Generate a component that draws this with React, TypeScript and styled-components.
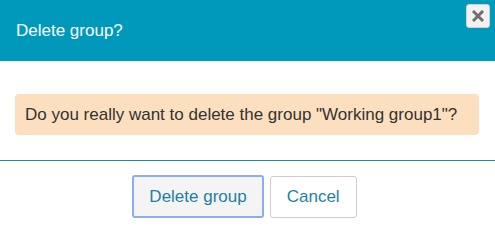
import * as React from "react";
import { FunctionComponent } from "react";
import styled, { createGlobalStyle } from "styled-components";

const GlobalStyle = createGlobalStyle`
  html, body {
    margin: 0;
    padding: 0;
    background: #ffffff;
    font-family: "Liberation Sans", Arial, sans-serif;
  }
`;

const DialogRoot = styled.div`
  width: 495px;
  height: 230px;
  display: flex;
  flex-direction: column;
  background: #ffffff;
  overflow: hidden;
`;
const Header = styled.div`
  position: relative;
  height: 61px;
  display: flex;
  align-items: center;
  padding: 0 16px;
  box-sizing: border-box;
  background: #0099bb;
`;
const Title = styled.h2`
  margin: 0;
  font-size: 17px;
  font-weight: normal;
  color: #ffffff;
  line-height: 20px;
`;
const CloseButton = styled.button`
  position: absolute;
  top: 4px;
  right: 5px;
  width: 24px;
  height: 24px;
  padding: 0;
  border: 1px solid #d0d0d0;
  border-radius: 3px;
  background: #f2f2f2;
  display: flex;
  align-items: center;
  justify-content: center;
  cursor: pointer;
`;
const Body = styled.div`
  padding: 33px 16px 25px 15px;
`;
const Alert = styled.div`
  height: 41px;
  display: flex;
  align-items: center;
  padding: 0 10px;
  box-sizing: border-box;
  border-radius: 4px;
  background: #fbdfbf;
  color: #333;
  font-size: 17px;
`;
const Footer = styled.div`
  border-top: 1px solid #1f8aa8;
  display: flex;
  justify-content: center;
  gap: 6px;
  padding: 14px 6px 0 0;
`;
const Button = styled.button<{ $focused?: boolean }>`
  height: ${(p) => (p.$focused ? "43px" : "42px")};
  padding: 0 ${(p) => (p.$focused ? "15px" : "16px")};
  margin-top: ${(p) => (p.$focused ? "0" : "1px")};
  font-family: "Liberation Sans", Arial, sans-serif;
  font-size: 17px;
  color: #1f7fa3;
  background: ${(p) => (p.$focused ? "#f4f4f4" : "#ffffff")};
  border: ${(p) => (p.$focused ? "2px solid #8aaef0" : "1px solid #cccccc")};
  border-radius: 3px;
  cursor: pointer;
`;

const CloseIcon = () => (
  <svg width="12" height="12" viewBox="0 0 12 12">
    <path d="M2 2 L10 10 M10 2 L2 10" stroke="#6f6f6f" strokeWidth="3" strokeLinecap="square" />
  </svg>
);

const App: FunctionComponent = () => {
  return (
    <>
      <GlobalStyle />
      <DialogRoot>
        <Header>
          <Title>Delete group?</Title>
          <CloseButton aria-label="Close">
            <CloseIcon />
          </CloseButton>
        </Header>
        <Body>
          <Alert>Do you really want to delete the group "Working group1"?</Alert>
        </Body>
        <Footer>
          <Button $focused>Delete group</Button>
          <Button>Cancel</Button>
        </Footer>
      </DialogRoot>
    </>
  );
};

export default App;
